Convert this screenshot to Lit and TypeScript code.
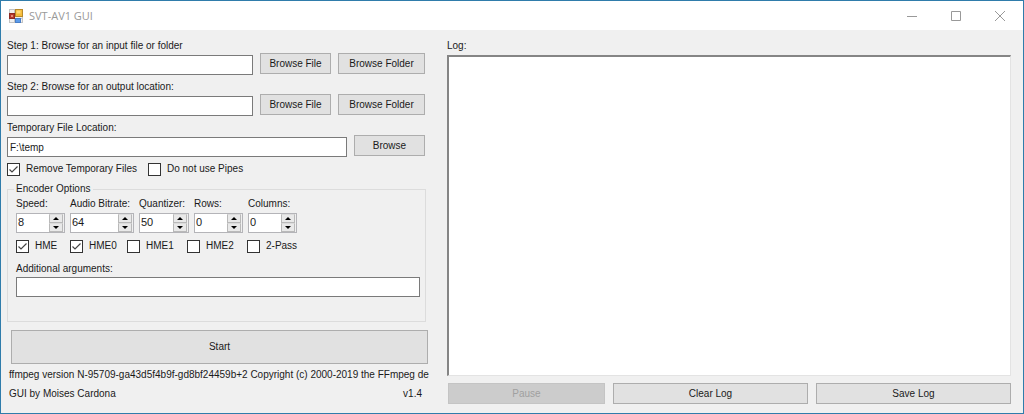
import { LitElement, html, css, svg } from "lit";
import { customElement, property, state } from "lit/decorators.js";

@customElement("number-spinner")
export class NumberSpinner extends LitElement {
  @property() label = "";
  @property({ type: Number }) value = 0;

  static styles = css`
    :host {
      display: block;
    }
    label {
      display: block;
      line-height: 14px;
      margin-bottom: 2px;
      white-space: nowrap;
    }
    .box {
      display: flex;
      height: 20px;
      box-sizing: border-box;
      border: 1px solid #b4b4b8;
      background: #fff;
    }
    input {
      flex: 1;
      min-width: 0;
      width: 0;
      margin: 0;
      padding: 0 0 2px 1px;
      border: 0;
      outline: 0;
      background: transparent;
      color: #1a1a1a;
      font: inherit;
      font-size: 11px;
      appearance: textfield;
    }
    input::-webkit-inner-spin-button {
      appearance: none;
      margin: 0;
    }
    .arrows {
      display: flex;
      flex-direction: column;
      width: 14px;
      padding-right: 1px;
      background: #f0f0f0;
    }
    .arrows button {
      flex: 1;
      display: flex;
      align-items: center;
      justify-content: center;
      min-height: 0;
      margin: 0;
      padding: 0;
      border: 1px solid #b9b9b9;
      border-top-color: #dcdcdc;
      background: #e9e9e9;
    }
    svg {
      display: block;
      width: 6px;
      height: 3px;
    }
  `;

  private step(by: number) {
    this.value = Math.max(0, this.value + by);
  }

  render() {
    return html`
      <label for="n">${this.label}</label>
      <div class="box">
        <input id="n" type="number" .value=${String(this.value)} />
        <div class="arrows">
          <button aria-label="Increase" @click=${() => this.step(1)}>
            <svg viewBox="0 0 6 3"><path d="M0 3 L3 0 L6 3Z" fill="#000" /></svg>
          </button>
          <button aria-label="Decrease" @click=${() => this.step(-1)}>
            <svg viewBox="0 0 6 3"><path d="M0 0 L3 3 L6 0Z" fill="#000" /></svg>
          </button>
        </div>
      </div>
    `;
  }
}

@customElement("app-root")
export class AppRoot extends LitElement {
  @state() private log = "";

  static styles = css`
    :host {
      display: flex;
      flex-direction: column;
      min-height: 100vh;
      box-sizing: border-box;
      border: 1px solid #2f7cab;
      background: #f0f0f0;
      color: #1a1a1a;
      font: 10px/14px "Liberation Sans", Arial, sans-serif;
    }
    .titlebar {
      display: flex;
      align-items: center;
      height: 29px;
      padding: 0 1px 0 8px;
      background: #fff;
    }
    .titlebar h1 {
      flex: 1;
      margin: 0 0 0 6px;
      font: 11px/14px "Open Sans", sans-serif;
      color: #999;
    }
    .logo {
      width: 14px;
      height: 14px;
    }
    .caption {
      display: flex;
      align-items: center;
      justify-content: center;
      width: 44px;
      height: 28px;
      padding: 0;
      border: 0;
      background: none;
    }
    .caption svg {
      width: 10px;
      height: 10px;
    }
    main {
      flex: 1;
      display: grid;
      grid-template-columns: 431px minmax(0, 1fr);
      column-gap: 9px;
      padding: 9px 12px 9px 6px;
    }
    .settings {
      min-width: 0;
      overflow: hidden;
    }
    .field {
      margin: 0 13px 5px 0;
    }
    .field label,
    .caption-text {
      display: block;
    }
    .row {
      display: flex;
      height: 22px;
      align-items: flex-start;
      gap: 7px;
    }
    .text {
      flex: 1;
      align-self: flex-end;
      min-width: 0;
      width: 100%;
      height: 20px;
      box-sizing: border-box;
      margin: 0;
      padding: 0 2px;
      border: 1px solid #7a7a7a;
      border-radius: 0;
      background: #fff;
      color: #1a1a1a;
      font: inherit;
    }
    .btn {
      height: 21px;
      box-sizing: border-box;
      padding: 0;
      border: 1px solid #adadad;
      border-radius: 0;
      background: #e1e1e1;
      color: #1a1a1a;
      font: inherit;
    }
    .btn:disabled {
      border-color: #c4c4c4;
      background: #cccccc;
      color: #a0a0a0;
    }
    .narrow {
      width: 71px;
    }
    .wide {
      width: 87px;
    }
    .check {
      display: flex;
      align-items: center;
      gap: 6px;
      height: 14px;
      white-space: nowrap;
    }
    .check input {
      appearance: none;
      width: 13px;
      height: 13px;
      box-sizing: border-box;
      flex: none;
      margin: 0;
      border: 1px solid #333;
      background: #fff;
    }
    .check input:checked {
      background: #fff
        url("data:image/svg+xml,%3Csvg xmlns='http://www.w3.org/2000/svg' viewBox='0 0 11 11'%3E%3Cpath d='M1.5 5.5 L4 8 L9.5 2.5' fill='none' stroke='%23444' stroke-width='1.2'/%3E%3C/svg%3E");
    }
    .checks {
      display: flex;
      gap: 11px;
      margin-bottom: 6px;
    }
    fieldset {
      margin: 0 12px 8px 0;
      padding: 1px 5px 24px 8px;
      border: 1px solid #dcdcdc;
      min-width: 0;
    }
    legend {
      margin-left: -2px;
      padding: 0 2px;
    }
    .numbers {
      display: grid;
      grid-template-columns: 49px 64px 50px 49px 49px;
      gap: 5px;
    }
    .modes {
      display: grid;
      grid-template-columns: 54px 57px 60px 60px auto;
      margin: 6px 0 9px;
    }
    fieldset .text {
      display: block;
      margin-top: 1px;
    }
    .start {
      display: block;
      width: calc(100% - 14px);
      height: 34px;
      margin-left: 4px;
    }
    .version {
      margin: 4px 0 5px 2px;
      white-space: nowrap;
    }
    .credits {
      display: flex;
      justify-content: space-between;
      margin: 0 16px 0 2px;
    }
    .output {
      display: flex;
      flex-direction: column;
      min-width: 0;
    }
    .log {
      flex: 1;
      box-sizing: border-box;
      width: 100%;
      min-height: 120px;
      margin: 2px 0 7px;
      padding: 2px;
      resize: none;
      border: 1px solid #e3e3e3;
      border-top: 2px solid #858585;
      border-left: 2px solid #858585;
      border-radius: 0;
      background: #fff;
      font: inherit;
    }
    .actions {
      display: grid;
      grid-template-columns: 157fr 195fr 195fr;
      gap: 8px;
      padding-left: 1px;
    }
  `;

  private check(text: string, checked = false) {
    return html`<label class="check"><input type="checkbox" .checked=${checked} />${text}</label>`;
  }

  private location(id: string, text: string) {
    return html`
      <div class="field">
        <label for=${id}>${text}</label>
        <div class="row">
          <input class="text" id=${id} type="text" />
          <button class="btn narrow">Browse File</button>
          <button class="btn wide">Browse Folder</button>
        </div>
      </div>
    `;
  }

  private glyph(d: string) {
    return html`<svg viewBox="0 0 10 10">
      ${svg`<path d=${d} fill="none" stroke="#999" />`}
    </svg>`;
  }

  render() {
    return html`
      <header class="titlebar">
        <svg class="logo" viewBox="0 0 14 14">
          <rect x="0.5" y="0.5" width="13" height="13" fill="#f1f1f1" stroke="#c3c3c3" />
          <path d="M5.5 1V13M1 9.5H13" stroke="#c3c3c3" />
          <rect x="6.5" y="0.5" width="7" height="7" fill="#f6bd3c" stroke="#b98a2a" />
          <rect x="7.5" y="1.5" width="4" height="3" fill="#ffdb78" />
          <rect x="0.5" y="4.5" width="5" height="5" fill="#b5382c" stroke="#8e2a22" />
          <rect x="2" y="6" width="2" height="2" fill="#e58a78" />
          <rect x="6.5" y="9.5" width="5" height="4" fill="#5b9bea" stroke="#4a7fc8" />
        </svg>
        <h1>SVT-AV1 GUI</h1>
        <button class="caption" aria-label="Minimize">${this.glyph("M0 5.5H10")}</button>
        <button class="caption" aria-label="Maximize">${this.glyph("M0.5 0.5H9.5V9.5H0.5Z")}</button>
        <button class="caption" aria-label="Close">${this.glyph("M0 0L10 10M10 0L0 10")}</button>
      </header>
      <main>
        <section class="settings">
          ${this.location("input", "Step 1: Browse for an input file or folder")}
          ${this.location("output", "Step 2: Browse for an output location:")}
          <div class="field">
            <label for="temp">Temporary File Location:</label>
            <div class="row">
              <input class="text" id="temp" type="text" value="F:\\temp" />
              <button class="btn narrow">Browse</button>
            </div>
          </div>
          <div class="checks">
            ${this.check("Remove Temporary Files", true)} ${this.check("Do not use Pipes")}
          </div>
          <fieldset>
            <legend>Encoder Options</legend>
            <div class="numbers">
              <number-spinner label="Speed:" .value=${8}></number-spinner>
              <number-spinner label="Audio Bitrate:" .value=${64}></number-spinner>
              <number-spinner label="Quantizer:" .value=${50}></number-spinner>
              <number-spinner label="Rows:" .value=${0}></number-spinner>
              <number-spinner label="Columns:" .value=${0}></number-spinner>
            </div>
            <div class="modes">
              ${this.check("HME", true)} ${this.check("HME0", true)} ${this.check("HME1")}
              ${this.check("HME2")} ${this.check("2-Pass")}
            </div>
            <label class="caption-text" for="args">Additional arguments:</label>
            <input class="text" id="args" type="text" />
          </fieldset>
          <button class="btn start">Start</button>
          <div class="version">
            ffmpeg version N-95709-ga43d5f4b9f-gd8bf24459b+2 Copyright (c) 2000-2019 the FFmpeg de
          </div>
          <div class="credits"><span>GUI by Moises Cardona</span><span>v1.4</span></div>
        </section>
        <section class="output">
          <label for="log">Log:</label>
          <textarea class="log" id="log" readonly .value=${this.log}></textarea>
          <div class="actions">
            <button class="btn" disabled>Pause</button>
            <button class="btn">Clear Log</button>
            <button class="btn">Save Log</button>
          </div>
        </section>
      </main>
    `;
  }
}
